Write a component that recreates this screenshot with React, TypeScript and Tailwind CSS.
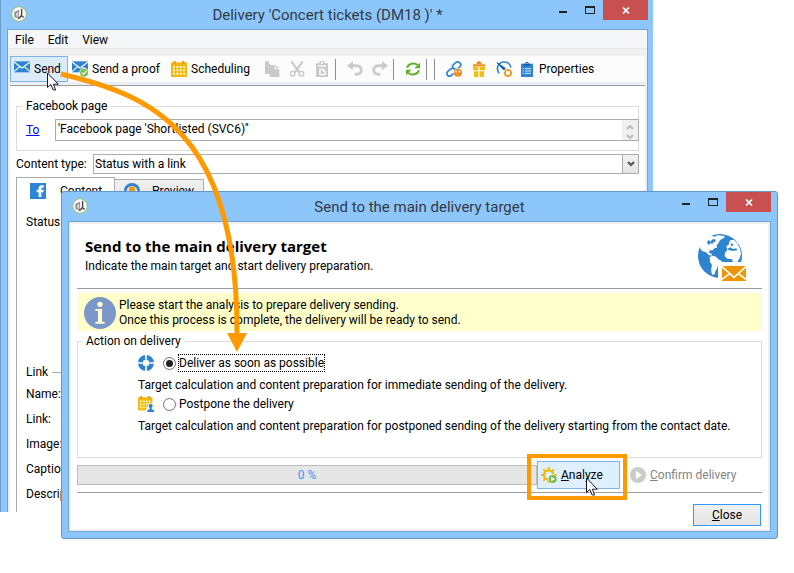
import type { ReactNode } from "react";

const BLUE = "#2f84d2";

function Icon({ children, className = "size-4" }: { children: ReactNode; className?: string }) {
  return (
    <svg viewBox="0 0 48 48" className={`shrink-0 ${className}`} aria-hidden="true">
      {children}
    </svg>
  );
}

function EnvelopeShape() {
  return (
    <>
      <path d="M0 1H48V34H0Z" fill={BLUE} />
      <path d="M0 3L24 21L48 3M0 32L17 17M48 32L31 17" fill="none" stroke="#fff" strokeWidth="3.5" />
    </>
  );
}

function SendIcon() {
  return (
    <Icon>
      <EnvelopeShape />
    </Icon>
  );
}

function ProofIcon() {
  return (
    <Icon>
      <EnvelopeShape />
      <circle cx="36" cy="35" r="14" fill="#fff" />
      <circle cx="36" cy="35" r="12" fill="#7ac043" />
      <path d="M29 35L34 40L43 30" fill="none" stroke="#fff" strokeWidth="3.5" />
    </Icon>
  );
}

function CalendarShape() {
  return (
    <>
      <path d="M0 4H48V48H0Z" fill="#f0b90b" />
      <path d="M8 0H14V9H8ZM34 0H40V9H34Z" fill="#f0921e" />
      <path
        d="M6 15H12V21H6ZM16 15H22V21H16ZM26 15H32V21H26ZM36 15H42V21H36ZM6 25H12V31H6ZM16 25H22V31H16ZM26 25H32V31H26ZM36 25H42V31H36ZM6 35H12V41H6ZM16 35H22V41H16ZM26 35H32V41H26ZM36 35H42V41H36Z"
        fill="#fff8d8"
      />
    </>
  );
}

function SchedulingIcon() {
  return (
    <Icon>
      <CalendarShape />
    </Icon>
  );
}

function PostponeIcon() {
  return (
    <Icon>
      <g transform="scale(0.9)">
        <CalendarShape />
      </g>
      <path d="M25 48V38L31 34V22H46V34L48 38V48Z" fill="#fff" />
      <circle cx="38" cy="29" r="6" fill={BLUE} />
      <path d="M35 33H41V39L48 43V48H28V43L35 39Z" fill={BLUE} />
    </Icon>
  );
}

function CopyIcon() {
  return (
    <Icon>
      <path d="M3 1H15V9H19V39H3Z" fill="#c9c9c9" />
      <path d="M17 12H32V25H46V48H17Z" fill="#c9c9c9" />
      <path d="M35 12L46 22H35Z" fill="#c9c9c9" />
    </Icon>
  );
}

function CutIcon() {
  return (
    <Icon>
      <path d="M7 1L31 35M41 1L17 35" stroke="#c9c9c9" strokeWidth="6" fill="none" />
      <circle cx="11" cy="38" r="7" fill="none" stroke="#c9c9c9" strokeWidth="4" />
      <circle cx="37" cy="38" r="7" fill="none" stroke="#c9c9c9" strokeWidth="4" />
    </Icon>
  );
}

function PasteIcon() {
  return (
    <Icon>
      <path d="M6 7H16V1H32V7H42V48H6Z" fill="#c9c9c9" />
      <path d="M12 13H36V17H12Z" fill="#fff" />
      <path d="M16 23H28L35 30V43H16Z" fill="#fff" />
      <path d="M20 27H26V32H31V39H20Z" fill="#c9c9c9" />
      <circle cx="24" cy="6" r="3" fill="#fff" />
    </Icon>
  );
}

function UndoIcon({ flipped = false }: { flipped?: boolean }) {
  return (
    <Icon className={flipped ? "size-4 -scale-x-100" : "size-4"}>
      <path d="M0 14L18 0V28Z" fill="#cbcbcb" />
      <path d="M14 14H30A12 12 0 0 1 30 40H23" fill="none" stroke="#cbcbcb" strokeWidth="9" />
    </Icon>
  );
}

function RefreshIcon() {
  return (
    <Icon>
      <path d="M6 20C10 8 27 3 38 12" fill="none" stroke="#5cb02c" strokeWidth="6" />
      <path d="M45 5V22H28Z" fill="#5cb02c" />
      <path d="M42 28C38 40 21 45 10 36" fill="none" stroke="#5cb02c" strokeWidth="6" />
      <path d="M3 43V26H20Z" fill="#5cb02c" />
    </Icon>
  );
}

function TrackedLinkIcon() {
  return (
    <Icon>
      <g fill="none" stroke={BLUE} strokeWidth="5">
        <path d="M21 22C17 17 20 13 23 10L29 5C38 -2 49 9 42 17L36 23C32 27 28 27 24 24" />
        <path d="M27 25C23 20 14 23 10 27L5 32C-2 40 8 50 16 43L23 37" />
      </g>
      <circle cx="36" cy="35" r="13" fill="#fff" />
      <circle cx="36" cy="35" r="12" fill="#f0861a" />
      <path d="M28 28L34 30L31 36L27 33ZM37 27L44 30L43 37L38 34ZM33 38L37 40L34 45Z" fill="#ffe2b8" />
    </Icon>
  );
}

function GiftIcon() {
  return (
    <Icon>
      <path d="M15 10L19 2L24 0L29 2L33 10Z" fill="#ef8a17" />
      <path d="M6 10H42V16H6Z" fill="#ef8a17" />
      <path d="M6 17H22V28H6ZM26 17H42V28H26ZM9 31H22V48H9ZM26 31H39V48H26Z" fill="#f2bd0c" />
    </Icon>
  );
}

function GaugeIcon() {
  return (
    <Icon>
      <path d="M9 37C-2 20 8 3 24 3C35 3 43 10 45 20" fill="none" stroke={BLUE} strokeWidth="5" />
      <path d="M3 5L28 22L23 27Z" fill="#1d62a8" stroke="#1d62a8" strokeWidth="3" />
      <circle cx="36" cy="36" r="9" fill="#fff" stroke="#f0961e" strokeWidth="5" />
      <path
        d="M36 23V27M36 45V49M23 36H27M45 36H49M27 27L30 30M45 27L42 30M27 45L30 42M45 45L42 42"
        stroke="#f0961e"
        strokeWidth="4"
      />
    </Icon>
  );
}

function PropertiesIcon() {
  return (
    <Icon>
      <path d="M6 8H42V48H6Z" fill={BLUE} />
      <path d="M14 14V8H19A5 6 0 0 1 29 8H34V14Z" fill="#1c5fa5" />
      <circle cx="24" cy="7" r="2" fill="#fff" />
      <path d="M18 23H36M18 30H36M18 37H36" stroke="#cfe6fa" strokeWidth="3" />
      <path d="M11 23H15M11 30H15M11 37H15" stroke="#cfe6fa" strokeWidth="3" />
    </Icon>
  );
}

function FacebookIcon() {
  return (
    <Icon>
      <path d="M0 0H48V48H0Z" fill="#2d86d3" />
      <path d="M26 42V28H20V20H26V16C26 9 30 7 35 7H41V14H37C34 14 34 15 34 18V20H41L40 28H34V42Z" fill="#fff" />
    </Icon>
  );
}

function PreviewIcon() {
  return (
    <Icon>
      <circle cx="24" cy="24" r="24" fill={BLUE} />
      <circle cx="24" cy="25" r="16" fill="#fff" />
      <circle cx="24" cy="20" r="10" fill="#f0961e" />
    </Icon>
  );
}

function LifebuoyIcon() {
  return (
    <Icon>
      <circle cx="24" cy="24" r="17" fill="none" stroke={BLUE} strokeWidth="14" />
      <path d="M24 0V14M24 34V48M0 24H14M34 24H48" stroke="#fff" strokeWidth="5" />
    </Icon>
  );
}

function AnalyzeIcon() {
  return (
    <Icon>
      <circle cx="23" cy="24" r="14" fill="none" stroke="#f2b90c" strokeWidth="7" />
      <path
        d="M23 0V9M23 39V48M0 24H8M38 24H47M7 7L13 13M39 7L33 13M7 41L13 35"
        stroke="#f2b90c"
        strokeWidth="6"
      />
      <circle cx="35" cy="36" r="14" fill="#dfeffd" />
      <circle cx="35" cy="36" r="12" fill="#76bd43" />
      <path d="M31 29L42 36L31 43Z" fill="#fff" />
    </Icon>
  );
}

function PlayIcon() {
  return (
    <Icon>
      <circle cx="24" cy="24" r="24" fill="#cbcbcb" />
      <path d="M18 12L36 24L18 36Z" fill="#fff" />
    </Icon>
  );
}

function InfoIcon() {
  return (
    <Icon className="size-8">
      <circle cx="24" cy="24" r="24" fill="#7b98c8" />
      <circle cx="24" cy="11" r="4" fill="#fffdd0" />
      <path d="M17 18H27V37H31V40H17V37H21V21H17Z" fill="#fffdd0" />
    </Icon>
  );
}

function AppLogo() {
  return (
    <Icon className="size-4">
      <circle cx="24" cy="24" r="22" fill="#fff" stroke="#8fc06a" strokeWidth="3" />
      <path d="M10 18L24 11V38L10 33Z" fill="#8e8e8e" />
      <path d="M15 21L22 17V33L15 31Z" fill="#cfcfcf" />
      <path d="M24 9H32V29H24Z" fill="#eeeeee" />
      <path d="M32 8V30L38 34M31 29L22 38" stroke="#444" strokeWidth="4" fill="none" />
    </Icon>
  );
}

function GlobeMailIcon() {
  return (
    <svg viewBox="534 162 144 141" className="h-[47px] w-12 shrink-0" aria-hidden="true">
      <circle cx="600" cy="228" r="66" fill={BLUE} />
      <path
        d="M541 194C548 181 560 172 574 167L582 170L594 166L614 168L612 174L600 180L595 190L590 196L591 203L584 204L578 211L570 211L566 217L574 221L576 227L566 225L558 217L546 213L540 204Z"
        fill="#fff"
      />
      <path d="M562 183L568 180L570 186L578 178L586 178L587 185L580 186L579 191L570 190L568 195L562 191Z" fill={BLUE} />
      <path d="M569 231L578 227L588 230L595 238L606 244L606 250L594 256L590 268L586 274L584 283L576 284L573 270L576 256L570 246Z" fill="#fff" />
      <path
        d="M632 180L642 180L652 190L660 206L663 222L658 236L652 246L640 248L636 238L622 236L614 228L615 218L622 210L619 199L626 194L628 185Z"
        fill="#fff"
      />
      <path d="M622 206L632 202L638 207L649 205L652 211L638 213L626 210ZM634 189L641 195L636 199L632 196Z" fill={BLUE} />
      <path d="M594 246H678V303H594Z" fill="#fff" />
      <path d="M606 258H678V303H606Z" fill="#ee9405" />
      <path d="M606 260L642 292L678 260M606 298L629 281M678 298L655 281" fill="none" stroke="#fff" strokeWidth="5" />
    </svg>
  );
}

function MouseCursor({ className }: { className: string }) {
  return (
    <svg viewBox="0 0 12 19" className={`pointer-events-none absolute h-[19px] w-3 ${className}`} aria-hidden="true">
      <path
        d="M0.5 1V15.5L3.8 12.5L6.2 18H8.6L6.4 12.2H11.3Z"
        fill="#fff"
        stroke="#15152a"
        strokeWidth="1"
      />
    </svg>
  );
}

function TitleBar({ title }: { title: string }) {
  return (
    <div className="flex h-[29px] items-start">
      <div className="flex h-7 w-[99px] shrink-0 items-center pl-1">
        <AppLogo />
      </div>
      <h1 className="flex-1 self-center truncate text-center text-[15px] leading-5 text-[#333b45]">{title}</h1>
      <div className="flex h-5 shrink-0">
        <button type="button" aria-label="Minimize" className="flex w-[27px] items-center justify-center">
          <span className="mt-1 h-[2px] w-2 bg-[#222]" />
        </button>
        <button type="button" aria-label="Maximize" className="flex w-[27px] items-center justify-center">
          <span className="h-2 w-[10px] border border-t-2 border-[#222]" />
        </button>
        <button type="button" aria-label="Close window" className="flex w-[45px] items-center justify-center bg-[#c85050]">
          <svg viewBox="0 0 8 7" className="h-[7px] w-2" aria-hidden="true">
            <path d="M1 0.5L7 6.5M7 0.5L1 6.5" stroke="#fff" strokeWidth="1.7" />
          </svg>
        </button>
      </div>
    </div>
  );
}

function ToolButton({ icon, label, className = "w-[25px] justify-center" }: { icon: ReactNode; label: string; className?: string }) {
  const labelled = className !== "w-[25px] justify-center";
  return (
    <button
      type="button"
      aria-label={label}
      className={`flex h-[26px] shrink-0 items-center gap-1 border whitespace-nowrap ${className} ${label === "Send" ? "border-[#7eb4ea] bg-[#dcebfa]" : "border-transparent"}`}
    >
      {icon}
      {labelled && <span>{label}</span>}
    </button>
  );
}

function Separator() {
  return <span className="mr-1.5 ml-px h-[21px] w-px shrink-0 bg-[#8c8c8c]" />;
}

function Chevron({ up = false, color }: { up?: boolean; color: string }) {
  return (
    <svg viewBox="0 0 8 6" className={`h-[6px] w-2 ${up ? "rotate-180" : ""}`} aria-hidden="true">
      <path d="M1 1L4 4L7 1" fill="none" stroke={color} strokeWidth="2.2" />
    </svg>
  );
}

function FieldRow({ id, label }: { id: string; label: string }) {
  return (
    <div className="flex h-[25px] items-center gap-4">
      <label htmlFor={id} className="w-20 shrink-0">
        {label}
      </label>
      <input id={id} className="h-5 flex-1 border border-[#ababab]" />
    </div>
  );
}

function DeliveryWindow() {
  return (
    <section className="isolate mr-[141px] h-[512px] overflow-hidden border-l border-[#6d9cc8] bg-[#8cc6fa] pr-[5px] pl-1.5">
      <TitleBar title="Delivery 'Concert tickets (DM18 )' *" />
      <div className="h-[483px] border border-b-0 border-[#74a5d2] bg-[#f0f0f0]">
        <nav className="flex h-[19px] items-center gap-3.5 border-b border-[#e6e6e6] bg-[#f5f6f7] px-[7px] pt-px">
          <button type="button">File</button>
          <button type="button">Edit</button>
          <button type="button">View</button>
        </nav>
        <div className="mx-0.5 mt-[7px] flex h-7 items-start border-b-2 border-[#e9eff9] bg-[#fcfcfc]">
          <ToolButton icon={<SendIcon />} label="Send" className="w-[58px] pl-[3px]" />
          <ToolButton icon={<ProofIcon />} label="Send a proof" className="w-[99px] pl-[3px]" />
          <ToolButton icon={<SchedulingIcon />} label="Scheduling" className="w-[92px] pl-[3px]" />
          <ToolButton icon={<CopyIcon />} label="Copy" />
          <ToolButton icon={<CutIcon />} label="Cut" />
          <ToolButton icon={<PasteIcon />} label="Paste" />
          <div className="flex h-[26px] items-center">
            <Separator />
            <ToolButton icon={<UndoIcon />} label="Undo" />
            <ToolButton icon={<UndoIcon flipped />} label="Redo" />
            <Separator />
            <ToolButton icon={<RefreshIcon />} label="Refresh" />
            <Separator />
            <Separator />
            <ToolButton icon={<TrackedLinkIcon />} label="Links" />
            <ToolButton icon={<GiftIcon />} label="Offers" />
            <ToolButton icon={<GaugeIcon />} label="Estimate" />
            <ToolButton icon={<PropertiesIcon />} label="Properties" className="pl-[2px]" />
          </div>
        </div>
        <div className="mx-0.5 mt-px h-full border-t border-[#9c9c9c] bg-white pt-3 pr-1.5 pl-1.5">
          <fieldset className="border border-[#dcdcdc] pb-[9px] pl-[9px]">
            <legend className="-ml-1 px-1 leading-4">Facebook page</legend>
            <div className="flex items-center pt-[5px]">
              <a href="#to" className="w-[29px] text-[#0000ee] underline">
                To
              </a>
              <div className="-mr-px flex h-[22px] flex-1 border border-[#ababab]">
                <input
                  aria-label="To"
                  defaultValue="'Facebook page 'Shortlisted (SVC6)''"
                  className="min-w-0 flex-1 pb-0.5 pl-0.5 outline-none"
                />
                <div className="flex w-4 flex-col items-center justify-between overflow-hidden bg-[#f0f0f0] pt-1">
                  <Chevron up color="#bdbdbd" />
                  <Chevron color="#bdbdbd" />
                </div>
              </div>
            </div>
          </fieldset>
          <div className="mt-[3px] flex h-5 items-center">
            <label htmlFor="content-type" className="w-[77px] shrink-0 whitespace-nowrap">
              Content type:
            </label>
            <div className="relative flex h-full flex-1 border border-[#ababab]">
              <select id="content-type" className="min-w-0 flex-1 appearance-none pr-5 pl-px outline-none">
                <option>Status with a link</option>
              </select>
              <span className="pointer-events-none absolute inset-y-0 right-0 flex w-4 items-center justify-center border-l border-[#ababab] bg-linear-to-b from-[#f2f2f2] to-[#e4e4e4]">
                <Chevron color="#555" />
              </span>
            </div>
          </div>
          <div className="mt-[3px] flex items-end">
            <button
              type="button"
              className="z-10 -mb-px flex h-[26px] w-[99px] items-center gap-3.5 border border-b-0 border-[#ababab] bg-white pl-[13px]"
            >
              <FacebookIcon />
              Content
            </button>
            <button
              type="button"
              className="flex h-[23px] w-[89px] items-center gap-3 border border-b-0 border-l-0 border-[#ababab] bg-linear-to-b from-[#f0f0f0] to-[#e5e5e5] pl-[9px]"
            >
              <PreviewIcon />
              Preview
            </button>
          </div>
          <div className="border border-[#ababab] px-[9px] pt-[11px] pb-24">
            <div className="flex h-[149px] items-start gap-4">
              <label htmlFor="status" className="w-20 leading-4">
                Status:
              </label>
              <textarea id="status" className="h-32 flex-1 border border-[#ababab]" />
            </div>
            <div className="flex h-[18px] items-center gap-1 leading-4">
              Link
              <span className="h-px flex-1 bg-[#ababab]" />
            </div>
            <FieldRow id="field-name" label="Name:" />
            <FieldRow id="field-link" label="Link:" />
            <FieldRow id="field-image" label="Image:" />
            <FieldRow id="field-caption" label="Caption:" />
            <FieldRow id="field-description" label="Description:" />
          </div>
        </div>
      </div>
    </section>
  );
}

function DeliveryOption({
  id,
  icon,
  label,
  description,
  checked = false,
}: {
  id: string;
  icon: ReactNode;
  label: string;
  description: string;
  checked?: boolean;
}) {
  return (
    <div className="h-[41px]">
      <div className="flex h-5 items-center">
        {icon}
        <input
          id={id}
          type="radio"
          name="delivery-action"
          defaultChecked={checked}
          className="mr-0.5 ml-[9px] size-[13px] appearance-none rounded-full border border-[#707070] bg-white bg-clip-content p-[2px] checked:bg-[#222]"
        />
        <label
          htmlFor={id}
          className={`border border-dotted leading-4 ${checked ? "border-black" : "border-transparent"}`}
        >
          {label}
        </label>
      </div>
      <p className="mt-1 leading-4">{description}</p>
    </div>
  );
}

function SendDialog() {
  return (
    <section
      role="dialog"
      aria-label="Send to the main delivery target"
      className="absolute top-[191px] right-4 left-[61px] rounded-[3px] border border-[#6298c8] bg-[#8cc6fa] px-1.5 pb-1.5"
    >
      <TitleBar title="Send to the main delivery target" />
      <div className="border border-[#6fa5d6] bg-[#f0f0f0] p-0.5">
        <div className="bg-white px-1.5 pb-[3px]">
          <header className="flex h-[65px] items-start justify-between border-b border-[#9c9c9c] pr-4 pl-2">
            <div className="pt-3">
              <h2 className="font-['Open_Sans','Noto_Sans',sans-serif] text-[15px] leading-5 font-bold">
                Send to the main delivery target
              </h2>
              <p className="mt-0.5 leading-4">Indicate the main target and start delivery preparation.</p>
            </div>
            <div className="pt-2.5">
              <GlobeMailIcon />
            </div>
          </header>
          <div className="mt-1 flex h-[38px] items-center gap-[3px] bg-[#ffffcc] pt-px pl-[7px]">
            <InfoIcon />
            <p className="leading-[15px]">
              Please start the analysis to prepare delivery sending.
              <br />
              Once this process is complete, the delivery will be ready to send.
            </p>
          </div>
          <fieldset className="mt-[2px] h-[125px] border border-[#dcdcdc] pl-[60px]">
            <legend className="-ml-[56px] px-1 leading-4">Action on delivery</legend>
            <div className="pt-1">
              <DeliveryOption
                id="deliver-now"
                icon={<LifebuoyIcon />}
                label="Deliver as soon as possible"
                description="Target calculation and content preparation for immediate sending of the delivery."
                checked
              />
              <DeliveryOption
                id="deliver-later"
                icon={<PostponeIcon />}
                label="Postpone the delivery"
                description="Target calculation and content preparation for postponed sending of the delivery starting from the contact date."
              />
            </div>
          </fieldset>
          <div className="flex h-[35px] items-start border-b border-[#9c9c9c]">
            <div
              role="progressbar"
              aria-valuenow={0}
              aria-valuemin={0}
              aria-valuemax={100}
              className="mt-[7px] h-5 flex-1 border border-[#bcbcbc] bg-[#e6e6e6] text-center leading-[18px] text-[#3399ff]"
            >
              0 %
            </div>
            <div className="z-10 -mt-1 -ml-[10px] shrink-0 border-4 border-[#ff9900] pt-[3px] pr-[3px] pb-[7px] pl-1.5">
              <button type="button" className="flex h-7 w-[83px] items-center gap-1 border border-[#7eb4ea] bg-[#deeffe] pl-[3px]">
                <AnalyzeIcon />
                <span>
                  <u>A</u>nalyze
                </span>
              </button>
            </div>
            <button
              type="button"
              disabled
              className="mt-[9px] flex w-[135px] shrink-0 items-center gap-1 pl-[3px] whitespace-nowrap text-[#838383]"
            >
              <PlayIcon />
              <span>
                <u>C</u>onfirm delivery
              </span>
            </button>
          </div>
          <footer className="flex justify-end pt-[11px] pr-px">
            <button type="button" className="h-[22px] w-[68px] border border-[#3399ff] bg-linear-to-b from-[#f0f0f0] to-[#e5e5e5]">
              <u>C</u>lose
            </button>
          </footer>
        </div>
      </div>
    </section>
  );
}

export default function App() {
  return (
    <main className="relative min-h-screen overflow-hidden bg-white font-['Roboto','Open_Sans',sans-serif] text-[12px] leading-4 text-black">
      <DeliveryWindow />
      <SendDialog />
      <svg
        viewBox="0 0 200 290"
        className="pointer-events-none absolute top-[70px] left-[55px] z-20 h-[290px] w-[200px]"
        aria-hidden="true"
      >
        <path d="M6 4C95 25 183 60 182 265" fill="none" stroke="#ff9900" strokeWidth="5" />
        <path d="M172 263H192L182 282Z" fill="#ff9900" />
      </svg>
      <MouseCursor className="top-[72px] left-[47px] z-20" />
      <MouseCursor className="top-[477px] left-[586px] z-20" />
    </main>
  );
}
